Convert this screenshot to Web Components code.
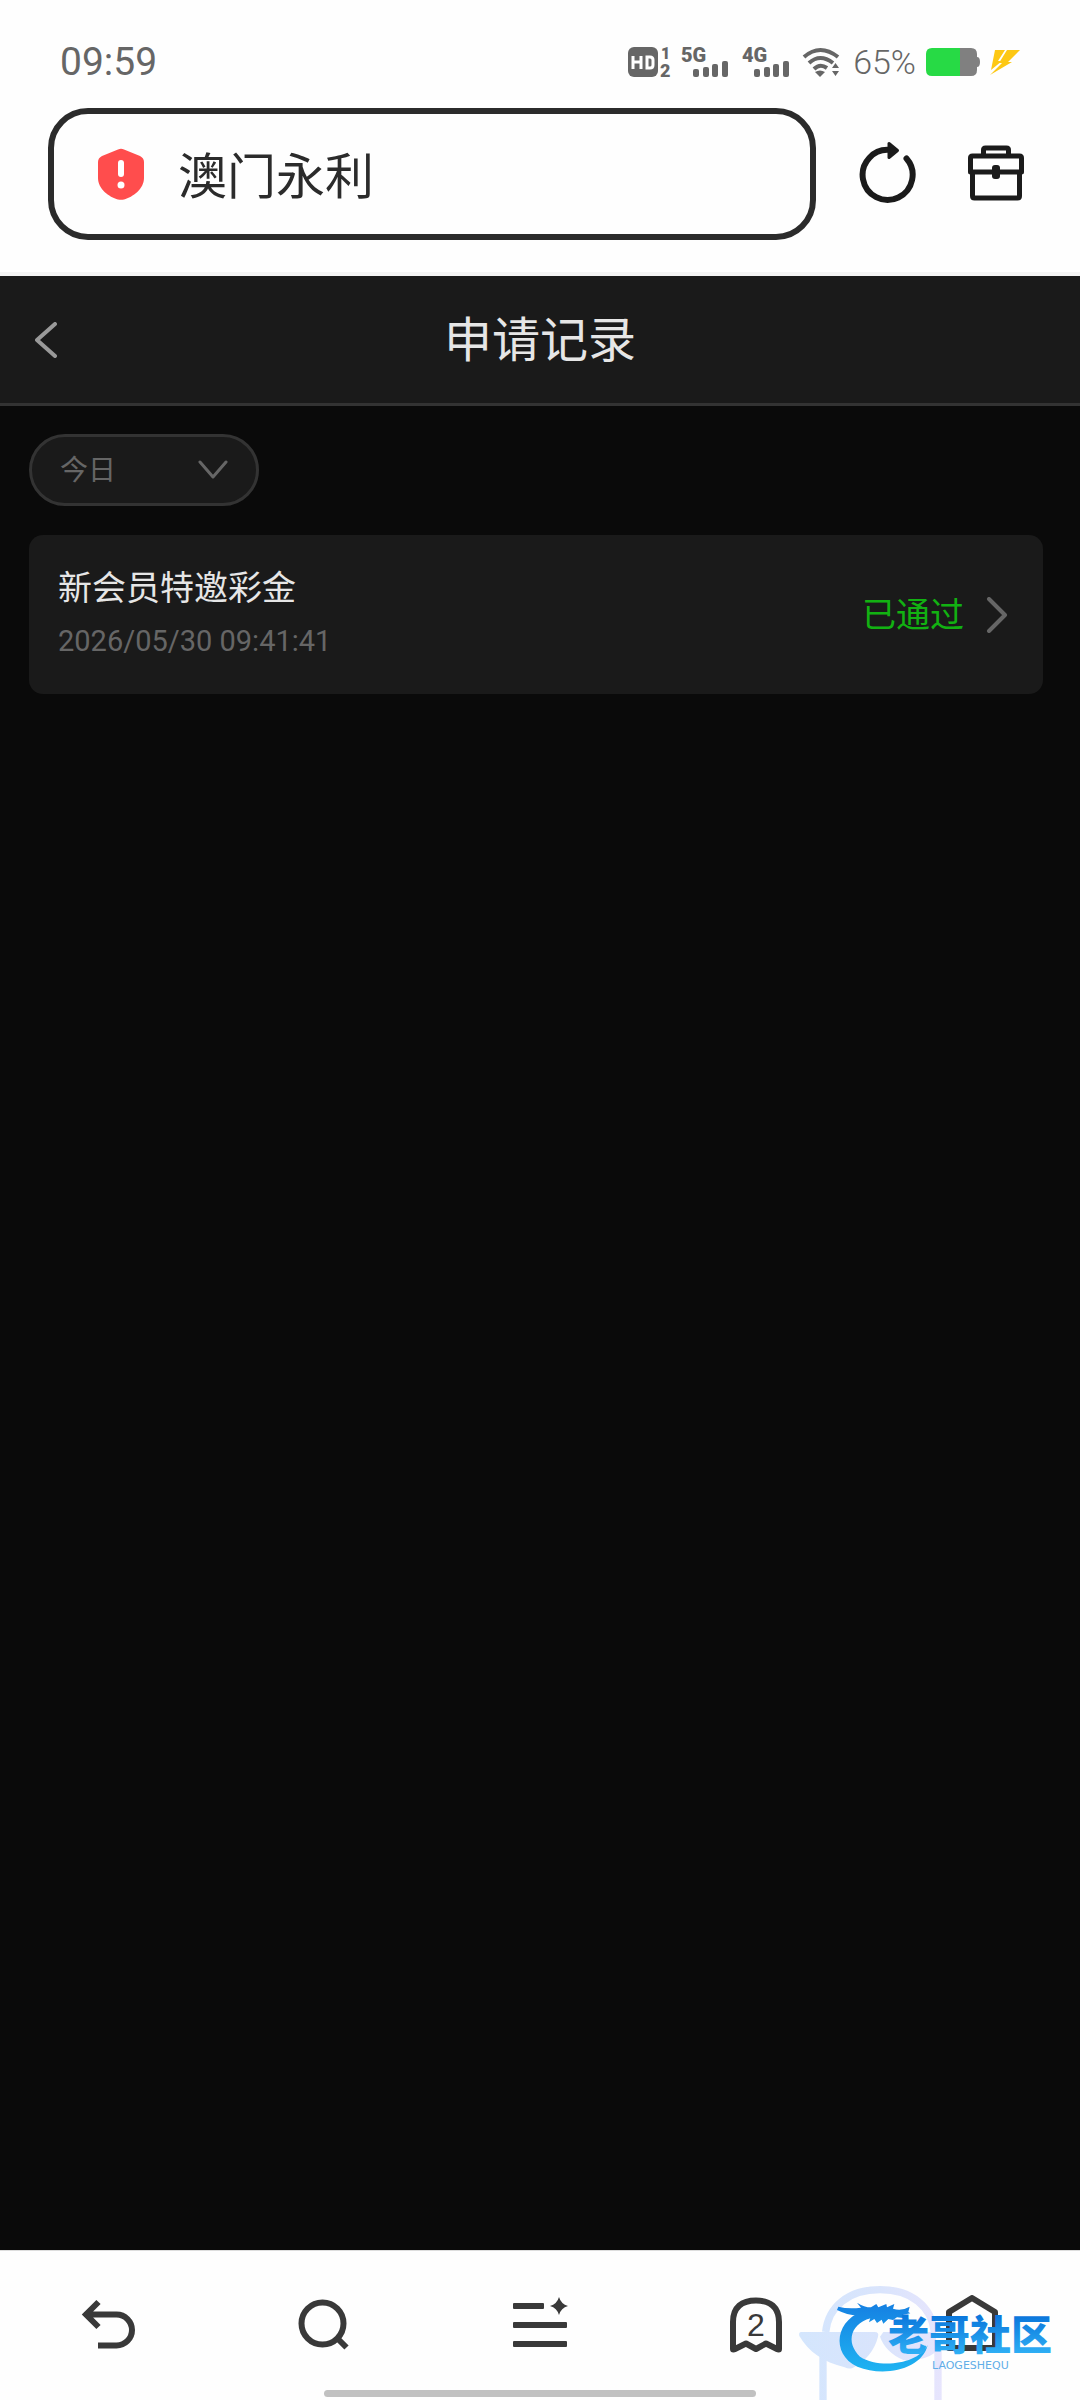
<!DOCTYPE html>
<html lang="zh-CN">
<head>
<meta charset="utf-8">
<meta name="viewport" content="width=device-width, initial-scale=1">
<title>申请记录</title>
<style>
    body {
        margin: 0;
        background: #0a0a0a;
        font-family: Roboto, "Noto Sans CJK SC", sans-serif;
    }
</style>
</head>
<body>
<app-shell>
    <status-bar slot="top" time="09:59" battery="65"></status-bar>
    <address-bar slot="top" value="澳门永利"></address-bar>
    <page-header slot="top">申请记录</page-header>

    <date-filter></date-filter>
    <record-item href="#record">
        新会员特邀彩金
        <time slot="time" datetime="2026-05-30T09:41:41">2026/05/30 09:41:41</time>
        <span slot="state">已通过</span>
    </record-item>

    <tab-bar slot="bottom" tabs="2"></tab-bar>
</app-shell>

<script>
// Small base: each element only has to supply its markup
class BaseElement extends HTMLElement {
    constructor() {
        super()
        this.attachShadow({ mode: 'open' })
    }

    connectedCallback() {
        this.shadowRoot.innerHTML = this.render()
    }
}

class AppShell extends BaseElement {
    render() {
        return `
            <style>
                :host { display: flex; flex-direction: column; min-height: 100vh; }
                main {
                    flex: 1;
                    display: flex;
                    flex-direction: column;
                    align-items: stretch;
                    gap: 29px;
                    padding: 28px 37px 28px 29px;
                }
            </style>
            <slot name="top"></slot>
            <main><slot></slot></main>
            <slot name="bottom"></slot>
        `
    }
}

class StatusBar extends BaseElement {
    // network label with four signal bars
    signal(label) {
        return `
            <svg width="51" height="30" fill="#666">
                <text x="0" y="15" font-size="20" font-weight="900">${label}</text>
                <rect x="12" y="22" width="6" height="8" rx="2"/>
                <rect x="22" y="20" width="6" height="10" rx="2"/>
                <rect x="31" y="17" width="6" height="13" rx="2"/>
                <rect x="41" y="14" width="6" height="16" rx="2"/>
            </svg>`
    }

    render() {
        return `
            <style>
                :host {
                    display: flex;
                    align-items: center;
                    justify-content: space-between;
                    padding: 40px 60px 0;
                    background: #fefefe;
                    color: #666;
                    line-height: 42px;
                }
                .time { font-size: 39px; line-height: 44px; }
                .icons { display: flex; align-items: center; gap: 10px; height: 40px; font-size: 34px; }
                .battery { font-weight: 300; }
                svg { display: block; overflow: visible; }
            </style>
            <span class="time">${this.getAttribute('time')}</span>
            <div class="icons">
                <svg width="43" height="30">
                    <rect width="30" height="30" rx="6" fill="#666"/>
                    <path d="M5 9v13M13 9v13M5 15h8M19 10h3q3 0 3 3v5q0 3-3 3h-3z" fill="none" stroke="#fff" stroke-width="3"/>
                    <text x="33" y="12" font-size="16" font-weight="900" fill="#666">1</text>
                    <text x="32" y="30" font-size="18" font-weight="900" fill="#666">2</text>
                </svg>
                ${this.signal('5G')}
                ${this.signal('4G')}
                <svg width="40" height="30" fill="none" stroke="#666" stroke-width="4">
                    <path d="M1 10Q17-4 35 10M6 16Q17 6 30 16M11 22Q17 16 24 21"/>
                    <path d="M12 25q5-3 10 0l-5 5z" fill="#666" stroke="none"/>
                    <path d="M29 21l3.500-5 3.500 5zM29 24h7l-3.500 5z" fill="#666" stroke="none"/>
                </svg>
                <span class="battery">${this.getAttribute('battery')}%</span>
                <svg width="54" height="28">
                    <path d="M34 0h11q6 0 6 6v3q3 0 3 5t-3 5v3q0 6-6 6H34z" fill="#808080"/>
                    <path d="M34 0H6Q0 0 0 6v16q0 6 6 6h28z" fill="#27da45"/>
                </svg>
                <svg width="30" height="25" fill="#fdc814">
                    <path d="M5 0h10L8 11h4L1 20zM17 0h13L18 12h4L0 25l12-12H9z"/>
                </svg>
            </div>
        `
    }
}

class AddressBar extends BaseElement {
    render() {
        return `
            <style>
                :host {
                    display: flex;
                    align-items: center;
                    gap: 42px;
                    padding: 24px 54px 32px 48px;
                    background: #fefefe;
                    border-bottom: 4px solid #f4f4f4;
                }
                label {
                    flex: 1;
                    min-width: 0;
                    box-sizing: border-box;
                    height: 132px;
                    display: flex;
                    align-items: center;
                    gap: 34px;
                    padding: 0 44px;
                    border: 6px solid #2b2b2b;
                    border-radius: 40px;
                }
                input {
                    flex: 1;
                    min-width: 0;
                    padding: 0 0 2px;
                    border: 0;
                    outline: 0;
                    background: none;
                    color: #2b2b2b;
                    font: 49px/72px "Noto Sans CJK SC", sans-serif;
                }
                .actions { display: flex; gap: 48px; }
                button { padding: 0; border: 0; background: none; }
                svg { display: block; flex: none; }
            </style>
            <label>
                <svg width="46" height="52" role="img" aria-label="不安全">
                    <path d="M20 1.500Q23 0 26 1.500L42 8q4 2 4 6v16C46 41 35 49 26 51.500Q23 52 20 51.500C11 49 0 41 0 30V14Q0 10 4 8z" fill="#ff4d4d"/>
                    <path d="M23 15v11" stroke="#fff" stroke-width="6" stroke-linecap="round"/>
                    <circle cx="23" cy="37" r="3.500" fill="#fff"/>
                </svg>
                <input type="text" aria-label="网址" value="${this.getAttribute('value')}">
            </label>
            <div class="actions">
                <button aria-label="刷新">
                    <svg width="60" height="68" fill="none" stroke="#1b1b1b" stroke-width="6">
                        <path d="M32 10A25 25 0 1 0 48.500 18.500" stroke-linecap="round"/>
                        <path d="M31 3.500v14l8.500-7z" fill="#1b1b1b" stroke-width="3" stroke-linejoin="round"/>
                    </svg>
                </button>
                <button aria-label="工具箱">
                    <svg width="60" height="68" fill="none" stroke="#1b1b1b" stroke-width="5" stroke-linejoin="round">
                        <path d="M17.500 16V10q0-2 2-2h21q2 0 2 2v6M4.500 32V18q0-2 2-2h47q2 0 2 2v14zM6.500 32v24q0 2 2 2h43q2 0 2-2V32"/>
                        <rect x="26" y="25" width="8" height="14" rx="3" fill="#1b1b1b" stroke="none"/>
                    </svg>
                </button>
            </div>
        `
    }
}

class PageHeader extends BaseElement {
    render() {
        return `
            <style>
                :host {
                    display: grid;
                    grid-template-columns: 60px 1fr 60px;
                    align-items: center;
                    height: 127px;
                    padding: 0 16px;
                    background: #1a1a1a;
                    border-bottom: 3px solid #333;
                }
                button { padding: 0; border: 0; background: none; }
                svg { display: block; margin: 0 auto; }
                h1 {
                    margin: 0;
                    padding-bottom: 8px;
                    color: #e6e6e6;
                    font: 400 48px/72px "Noto Sans CJK SC", sans-serif;
                    text-align: center;
                }
            </style>
            <button aria-label="返回">
                <svg width="22" height="36" fill="none" stroke="#999" stroke-width="4" stroke-linecap="round" stroke-linejoin="round">
                    <path d="M20 2L2 18l18 16"/>
                </svg>
            </button>
            <h1><slot></slot></h1>
        `
    }
}

class DateFilter extends BaseElement {
    render() {
        return `
            <style>
                :host { display: block; }
                label {
                    display: inline-grid;
                    grid-template-columns: 230px;
                    align-items: center;
                    vertical-align: top;
                }
                select, svg { grid-area: 1 / 1; }
                select {
                    appearance: none;
                    box-sizing: border-box;
                    height: 72px;
                    padding: 0 60px 4px 28px;
                    border: 3px solid #333;
                    border-radius: 36px;
                    background: #1a1a1a;
                    color: #666;
                    font: 28px/42px "Noto Sans CJK SC", sans-serif;
                }
                svg { justify-self: end; margin-right: 31px; pointer-events: none; }
            </style>
            <label>
                <select aria-label="日期">
                    <option>今日</option>
                </select>
                <svg width="30" height="20" fill="none" stroke="#666" stroke-width="3" stroke-linecap="round" stroke-linejoin="round">
                    <path d="M2 2l13 15L28 2"/>
                </svg>
            </label>
        `
    }
}

class RecordItem extends BaseElement {
    render() {
        return `
            <style>
                :host { display: block; }
                a {
                    display: flex;
                    align-items: center;
                    gap: 22px;
                    padding: 28px 35px 28px 29px;
                    border-radius: 14px;
                    background: #1a1a1a;
                    text-decoration: none;
                }
                .info { flex: 1; display: grid; gap: 6px; padding-bottom: 2px; }
                .title { color: #e6e6e6; font-size: 34px; line-height: 50px; }
                .time { color: #666; font-size: 29px; line-height: 45px; }
                .state { color: #12b112; font-size: 34px; line-height: 50px; }
            </style>
            <a href="${this.getAttribute('href')}">
                <div class="info">
                    <div class="title"><slot></slot></div>
                    <div class="time"><slot name="time"></slot></div>
                </div>
                <div class="state"><slot name="state"></slot></div>
                <svg width="22" height="36" fill="none" stroke="#666" stroke-width="4" stroke-linecap="round" stroke-linejoin="round">
                    <path d="M3 2l16 16L3 34"/>
                </svg>
            </a>
        `
    }
}

class TabBar extends BaseElement {
    render() {
        return `
            <style>
                :host {
                    display: block;
                    position: relative;
                    background: #fefefe;
                    border-top: 1px solid #ddd;
                }
                nav { display: flex; padding: 44px 0 35px; }
                button { flex: 1; padding: 0; border: 0; background: none; }
                svg { display: block; margin: 0 auto; }
                .handle {
                    width: 40%;
                    height: 7px;
                    margin: 0 auto 3px;
                    border-radius: 4px;
                    background: #c1c1c1;
                }
                /* floats over the last tab */
                forum-mark { position: absolute; right: 0; bottom: 0; }
            </style>
            <nav>
                <button aria-label="后退">
                    <svg width="60" height="60" fill="none" stroke="#393939" stroke-width="6">
                        <path d="M20.500 7L8 19.500l12.500 12.500M9 19.500h29.500a15.500 15.500 0 0 1 0 31H20"/>
                    </svg>
                </button>
                <button aria-label="搜索">
                    <svg width="60" height="60" fill="none" stroke="#393939" stroke-width="6">
                        <circle cx="28.500" cy="28.500" r="21"/>
                        <path d="M42.500 42.500l10 10"/>
                    </svg>
                </button>
                <button aria-label="菜单">
                    <svg width="60" height="60" fill="#393939">
                        <rect x="3" y="8" width="31" height="6" rx="1"/>
                        <rect x="3" y="27" width="54" height="6" rx="1"/>
                        <rect x="3" y="46" width="54" height="6" rx="1"/>
                        <path d="M49 2q2 7 9 9-7 2-9 9-2-7-9-9 7-2 9-9z"/>
                    </svg>
                </button>
                <button aria-label="标签页">
                    <svg width="60" height="60">
                        <path d="M7 54V27C7 12 16 5.500 30 5.500S53 12 53 27v27q0 1-2 0l-11-5.500L30 54l-10-5.500L9 54q-2 1-2 0z" fill="none" stroke="#393939" stroke-width="6" stroke-linejoin="round"/>
                        <text x="30" y="41" font-size="32" font-weight="500" fill="#393939" text-anchor="middle">${this.getAttribute('tabs')}</text>
                    </svg>
                </button>
                <button aria-label="主页">
                    <svg width="60" height="60" fill="none" stroke="#393939" stroke-width="6" stroke-linejoin="round">
                        <path d="M7 53V17L30 3l23 14v36z"/>
                    </svg>
                </button>
            </nav>
            <div class="handle"></div>
            <forum-mark></forum-mark>
        `
    }
}

// Community logo: pale arch behind, dragon ring and name in front
class ForumMark extends BaseElement {
    render() {
        return `
            <style>
                :host { display: block; pointer-events: none; }
                svg { display: block; }
            </style>
            <svg width="285" height="120" viewBox="45 150 855 360">
                <defs>
                    <linearGradient id="pale" gradientUnits="userSpaceOnUse" x1="57" y1="0" x2="540" y2="0">
                        <stop offset="0" stop-color="#d4e6fd"/>
                        <stop offset="0.5" stop-color="#d9e4fc"/>
                        <stop offset="1" stop-color="#ebe5fd"/>
                    </linearGradient>
                    <linearGradient id="blue" gradientUnits="userSpaceOnUse" x1="0" y1="220" x2="0" y2="425">
                        <stop offset="0" stop-color="#1580e2"/>
                        <stop offset="1" stop-color="#1fb4f2"/>
                    </linearGradient>
                    <linearGradient id="name" gradientUnits="userSpaceOnUse" x1="0" y1="260" x2="0" y2="372">
                        <stop offset="0" stop-color="#0b78dc"/>
                        <stop offset="1" stop-color="#2fb0f5"/>
                    </linearGradient>
                </defs>
                <path d="M137 306C145 230 205 179 300 179S455 230 463 306M129 350v160M474 350v160" fill="none" stroke="url(#pale)" stroke-width="22"/>
                <path d="M64 306H284q14 0 10 14-15 60-76 94-12 4-24-2C130 396 85 365 58 318q-3-12 6-12zM310 306h158v60q-40 30-98 24-54-24-70-70z" fill="url(#pale)"/>
                <path d="M262 240C165 262 150 372 232 410 310 442 425 420 443 345 415 402 300 418 240 380 195 338 210 275 285 262z" fill="url(#blue)"/>
                <path d="M175 230q30 8 68 3l-12-15q22 14 42 14l16-10 6 10 24-10 2 10 22-10-4 14q26 8 50-6l-4 16 6 4-22 4 18 12-36-4-12 8-14-3-15 14-5-12-14 10-8-12-16 10 4-14-22 6 8-14-24 2q-32-2-62-17z" fill="url(#blue)"/>
                <text x="324" y="361" font-size="123" font-weight="900" font-family="Noto Sans CJK SC, sans-serif" fill="url(#name)">老哥社区</text>
                <text x="456" y="418" font-size="33" font-family="DejaVu Sans, sans-serif" fill="#62aee8">LAOGESHEQU</text>
            </svg>
        `
    }
}

customElements.define('app-shell', AppShell)
customElements.define('status-bar', StatusBar)
customElements.define('address-bar', AddressBar)
customElements.define('page-header', PageHeader)
customElements.define('date-filter', DateFilter)
customElements.define('record-item', RecordItem)
customElements.define('forum-mark', ForumMark)
customElements.define('tab-bar', TabBar)
</script>
</body>
</html>
